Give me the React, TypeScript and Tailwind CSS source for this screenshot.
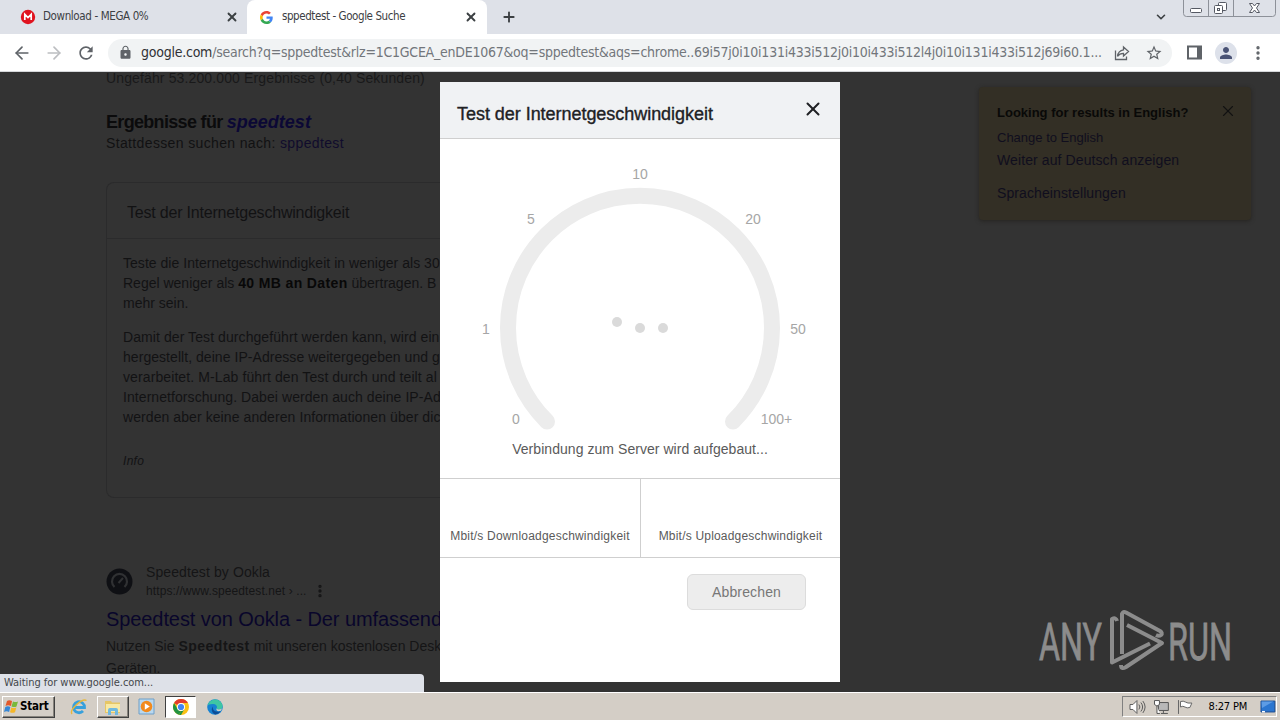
import type { ReactNode } from "react";
import { ArrowLeft, ArrowRight, ChevronDown, MoreVertical, Plus, X } from "lucide-react";
import { MdLock, MdRefresh, MdStarBorder, MdPerson } from "react-icons/md";

/* ---------- Browser chrome ---------- */

function MegaIcon() {
  return (
    <svg className="w-4 h-4" viewBox="0 0 16 16">
      <circle cx="8" cy="8" r="7.2" fill="#e0131f" />
      <path d="M4.8 11V5.4L8 8.6l3.2-3.2V11" fill="none" stroke="#fff" strokeWidth="1.7" />
    </svg>
  );
}

function GoogleIcon() {
  return (
    <svg className="w-[13px] h-[13px]" viewBox="0 0 48 48">
      <path fill="#EA4335" d="M24 9.5c3.5 0 6.7 1.2 9.2 3.6l6.9-6.9C35.9 2.4 30.5 0 24 0 14.6 0 6.5 5.4 2.6 13.2l8 6.2C12.4 13.7 17.7 9.5 24 9.5z" />
      <path fill="#4285F4" d="M47 24.6c0-1.6-.2-3.1-.4-4.6H24v9h12.9c-.6 3-2.2 5.500-4.700 7.200l7.700 6C44.400 38 47 31.800 47 24.600z" />
      <path fill="#FBBC05" d="M10.500 28.600c-.5-1.500-.8-3-.8-4.600s.3-3.100.8-4.600l-8-6.200C.9 16.500 0 20.100 0 24s.9 7.500 2.600 10.800l7.900-6.200z" />
      <path fill="#34A853" d="M24 48c6.500 0 11.900-2.100 15.900-5.800l-7.700-6c-2.200 1.500-4.900 2.300-8.200 2.300-6.300 0-11.600-4.200-13.500-9.900l-7.900 6.200C6.500 42.600 14.600 48 24 48z" />
    </svg>
  );
}

function WindowControls() {
  return (
    <svg className="absolute top-0 left-[1183px] w-[94px] h-[17px]" viewBox="0 0 94 17" fill="none">
      <path d="M.5 0v13.500q0 3 3 3h86q3 0 3-3V0M25.500 0v16M50.500 0v16" stroke="#8d9199" />
      <rect x="7.500" y="8.500" width="11" height="4" rx="1" fill="#fff" stroke="#555963" />
      <rect x="35.500" y="2.500" width="8" height="8" rx="1" fill="#fff" stroke="#555963" />
      <rect x="31.500" y="5.500" width="8" height="8" rx="1" fill="#fff" stroke="#555963" />
      <rect x="34.500" y="8.500" width="2" height="2" stroke="#555963" />
      <path d="M66.500 3.500h3l2 2.500 2-2.500h3L73.500 8l3 4.500h-3l-2-2.500-2 2.500h-3l3-4.500z" fill="#fff" stroke="#555963" />
    </svg>
  );
}

function TabStrip() {
  return (
    <div className="relative flex h-[34px] bg-[#dee1e8] text-[11.5px] text-[#3c4043]">
      <div className="flex w-[247px] items-center pl-5">
        <MegaIcon />
        <span className="ml-[7px] w-[106px] whitespace-nowrap tracking-[-0.37px]">Download - MEGA 0%</span>
        <X className="ml-[76px] w-3.5 h-3.5" strokeWidth={3.200} />
      </div>
      <div className="flex w-[240px] items-center rounded-t-lg bg-white pl-[13px]">
        <GoogleIcon />
        <span className="ml-[9px] w-[124px] whitespace-nowrap tracking-[-0.42px]">sppedtest - Google Suche</span>
        <X className="ml-[58px] w-3.5 h-3.5" strokeWidth={3.200} />
      </div>
      <Plus className="ml-[14px] mt-[9px] w-4 h-4" strokeWidth={2.800} />
      <ChevronDown className="absolute left-[1154px] top-[10px] w-3.5 h-3.5" strokeWidth={2.800} />
      <WindowControls />
    </div>
  );
}

function Toolbar() {
  return (
    <div className="flex h-[38px] items-center border-b border-[#d5d7da] bg-white text-[#5f6368]">
      <ArrowLeft className="ml-[12px] w-5 h-5" />
      <ArrowRight className="ml-[12px] w-5 h-5 text-[#bcbec1]" />
      <MdRefresh className="ml-[12px] w-5 h-5" />
      <div className="ml-[12px] flex h-[28px] w-[1064px] items-center rounded-full bg-[#f1f3f4] pl-[10px]">
        <MdLock className="w-[15px] h-[15px]" />
        <span className="ml-[8px] w-[961px] whitespace-nowrap text-[14px] tracking-[-0.243px] text-[#72767b]">
          <span className="text-[#303134]">google.com</span>
          /search?q=sppedtest&amp;rlz=1C1GCEA_enDE1067&amp;oq=sppedtest&amp;aqs=chrome..69i57j0i10i131i433i512j0i10i433i512l4j0i10i131i433i512j69i60.1...
        </span>
        <svg className="ml-[12px] w-4 h-4" viewBox="0 0 16 16" fill="none" stroke="currentColor" strokeWidth="1.300">
          <path d="M1.500 5.500v9h11v-3M9.500 2l5 4.500-5 4.500V8.300c-3 0-4.700 1-6 3 .4-3.300 2.200-5.800 6-6.400z" />
        </svg>
        <MdStarBorder className="ml-[15px] w-[18px] h-[18px]" />
      </div>
      <svg className="ml-[15px] w-[15px] h-[15px]" viewBox="0 0 15 15" fill="none">
        <path d="M1 1.500h13v12H1z" stroke="currentColor" strokeWidth="2" />
        <path d="M10 1h4v13h-4z" fill="currentColor" />
      </svg>
      <span className="ml-[13px] flex h-[22px] w-[22px] items-center justify-center rounded-full bg-[#dde1ea] text-[#4a5375]">
        <MdPerson className="w-[18px] h-[18px]" />
      </span>
      <MoreVertical className="ml-[12px] w-[18px] h-[18px]" strokeWidth={2.500} />
    </div>
  );
}

/* ---------- Search results behind the dialog ---------- */

function Line({ className, children }: { className: string; children: ReactNode }) {
  return <div className={`whitespace-nowrap ${className}`}>{children}</div>;
}

function SpeedtestCard() {
  return (
    <div className="mt-[29px] h-[316px] w-[334px] rounded-l-lg border border-r-0 border-[#2b2b2c] text-[14px] leading-5 text-[#121213]">
      <Line className="h-[56px] border-b border-[#2b2b2c] pl-5 pt-[20px] text-[16px] tracking-[-0.2px]">
        Test der Internetgeschwindigkeit
      </Line>
      <div className="pl-4 pt-[14px]">
        <Line className="tracking-[0.03px]">Teste die Internetgeschwindigkeit in weniger als 30</Line>
        <Line className="">
          Regel weniger als <b className="tracking-[0.37px] text-[#080808]">40 MB an Daten</b> übertragen. B
        </Line>
        <Line className="">mehr sein.</Line>
        <Line className="mt-[14px] tracking-[0.08px]">Damit der Test durchgeführt werden kann, wird ein</Line>
        <Line className="tracking-[0.05px]">hergestellt, deine IP-Adresse weitergegeben und g</Line>
        <Line className="tracking-[0.1px]">verarbeitet. M-Lab führt den Test durch und teilt al</Line>
        <Line className="tracking-[0.07px]">Internetforschung. Dabei werden auch deine IP-Ad</Line>
        <Line className="tracking-[0.08px]">werden aber keine anderen Informationen über dic</Line>
        <Line className="mt-[24px] text-[12px] italic tracking-[0.3px]">Info</Line>
      </div>
    </div>
  );
}

function OoklaResult() {
  return (
    <div className="mt-[64px] text-[14px] text-[#151516]">
      <div className="flex h-[38px]">
        <svg className="mt-[6px] w-[27px] h-[27px]" viewBox="0 0 27 27" fill="none">
          <circle cx="13.500" cy="13.500" r="13" fill="#0f1014" />
          <path d="M8.500 19a7.500 7.500 0 1 1 10 0" stroke="#303133" strokeWidth="2.200" />
          <path d="M12.500 15l4.500-5" stroke="#303133" strokeWidth="2" />
        </svg>
        <div className="ml-[13px]">
          <Line className="leading-5 tracking-[0.1px]">Speedtest by Ookla</Line>
          <div className="flex items-center text-[12px] leading-[18px]">
            <span className="w-[158px] whitespace-nowrap tracking-[0.1px]">https://www.speedtest.net › ...</span>
            <MoreVertical className="ml-[8px] w-4 h-4" strokeWidth={3} />
          </div>
        </div>
      </div>
      <Line className="mt-[6px] text-[20px] leading-[26px] tracking-[-0.09px] text-[#09062b]">Speedtest von Ookla - Der umfassend</Line>
      <Line className="mt-[3px] leading-[22px]">
        Nutzen Sie <b className="tracking-[0.5px]">Speedtest</b> mit unseren kostenlosen Desk
      </Line>
      <Line className="leading-[22px]">Geräten.</Line>
    </div>
  );
}

function Results() {
  return (
    <div className="h-full w-[440px] overflow-hidden pl-[106px]">
      <Line className="-mt-[4px] text-[14px] leading-5 tracking-[0.13px] text-[#19191a]">
        Ungefähr 53.200.000 Ergebnisse (0,40 Sekunden)
      </Line>
      <Line className="mt-[22px] text-[18px] font-bold leading-6 tracking-[-0.68px] text-[#0b0b0c]">
        Ergebnisse für <i className="tracking-[0px] text-[#0b0835]">speedtest</i>
      </Line>
      <Line className="mt-[-1px] text-[14px] leading-5 tracking-[0.36px] text-[#111112]">
        Stattdessen suchen nach: <span className="text-[#100c2c]">sppedtest</span>
      </Line>
      <SpeedtestCard />
      <OoklaResult />
    </div>
  );
}

function LanguageBox() {
  return (
    <div className="mt-[15px] ml-[139px] h-[133px] w-[272px] rounded-sm bg-[#332f25] pl-[18px] pt-[15px] text-[14px] leading-5 text-[#100e1e] shadow-[0_1px_4px_#252320]">
      <div className="flex">
        <Line className="w-[192px] pt-px text-[13px] font-bold text-[#090908]">Looking for results in English?</Line>
        <X className="ml-[30px] w-[18px] h-[18px] text-[#121212]" strokeWidth={1.500} />
      </div>
      <Line className="mt-[5px] text-[13px]">Change to English</Line>
      <Line className="mt-[2px] tracking-[0.1px]">Weiter auf Deutsch anzeigen</Line>
      <Line className="mt-[13px] tracking-[0.1px]">Spracheinstellungen</Line>
    </div>
  );
}

function AnyRunMark() {
  return (
    <div className="absolute left-[1038px] top-[536px] flex h-[66px] w-[194px] text-[#8c8c8c]">
      <svg viewBox="0 0 194 66" className="h-full w-full" fill="none" stroke="currentColor">
        <g fill="currentColor" strokeWidth="0.800" fontFamily="Roboto, sans-serif" fontSize="52">
          <text x="1" y="51.500" textLength="63" lengthAdjust="spacingAndGlyphs">ANY</text>
          <text x="130" y="51.500" textLength="64" lengthAdjust="spacingAndGlyphs">RUN</text>
        </g>
        <g strokeWidth="4" strokeLinejoin="round">
          <path d="M79 13q-1-4-5-2v43.500l38-19" />
          <path d="M84 46V6q1-3 4-1.500l34 18.500q3 2 1 4-2 1.500-5 0" />
          <path d="M89 17l35 18-36 24q-5 3-5-2" />
        </g>
      </svg>
    </div>
  );
}

/* ---------- Speed test dialog ---------- */

const TICKS = [
  { label: "0", x: 76, y: 285 },
  { label: "1", x: 46, y: 195 },
  { label: "5", x: 91, y: 85 },
  { label: "10", x: 200, y: 40 },
  { label: "20", x: 313, y: 85 },
  { label: "50", x: 358, y: 195 },
  { label: "100+", x: 336.500, y: 285 },
];

function Gauge() {
  return (
    <svg className="block w-[400px] h-[298px]" viewBox="0 0 400 298">
      <path d="M107 282.500A132 132 0 1 1 293 282.500" fill="none" stroke="#ececec" strokeWidth="16" strokeLinecap="round" />
      <g fill="#dadada">
        <circle cx="177" cy="183" r="5" />
        <circle cx="200" cy="189" r="5" />
        <circle cx="223" cy="189" r="5" />
      </g>
      <g fill="#a6a6a6" fontSize="14" textAnchor="middle">
        {TICKS.map((t) => (
          <text key={t.label} x={t.x} y={t.y}>
            {t.label}
          </text>
        ))}
      </g>
    </svg>
  );
}

function SpeedDialog() {
  return (
    <div className="absolute left-[440px] top-[10px] flex h-[600px] w-[400px] flex-col bg-white text-[#5a5a5a]">
      <div className="flex h-[57px] shrink-0 justify-between border-b border-[#cfcfcf] bg-[#f0f2f4] pl-[17px] pr-[16px] text-[#202124]">
        <span className="mt-[20px] whitespace-nowrap text-[18px] leading-6 tracking-[-0.04px] [-webkit-text-stroke:0.35px]">
          Test der Internetgeschwindigkeit
        </span>
        <X className="mt-[16px] w-[22px] h-[22px]" strokeWidth={2.200} />
      </div>
      <Gauge />
      <div className="h-[41px] shrink-0 text-center text-[14px] leading-5 tracking-[0.05px]">
        <div className="pt-[2px]">Verbindung zum Server wird aufgebaut...</div>
      </div>
      <div className="flex h-[80px] shrink-0 border-y border-[#cfcfcf] text-center text-[12px] leading-4">
        <div className="w-[201px] border-r border-[#cfcfcf] pt-[49px] tracking-[0.2px]">Mbit/s Downloadgeschwindigkeit</div>
        <div className="flex-1 pt-[49px] tracking-[0.2px]">Mbit/s Uploadgeschwindigkeit</div>
      </div>
      <button className="ml-[247px] mt-[16px] h-[36px] w-[119px] rounded-md border border-[#dcdcdc] bg-[#ededed] text-[14px] tracking-[0.15px] text-[#777]">
        Abbrechen
      </button>
    </div>
  );
}

/* ---------- Windows taskbar ---------- */

function StartButton() {
  return (
    <div className="flex h-[22px] w-[53px] items-center gap-px border border-t-white border-l-white border-r-[#404040] border-b-[#404040] pl-px text-[11.5px] font-bold text-black shadow-[inset_-1px_-1px_#87837c]">
      <svg className="w-[15px] h-[15px] shrink-0" viewBox="0 0 15 15">
        <path d="M3 2q2-1.500 5 0L7 7Q4 5.500 1.500 7z" fill="#e3592a" />
        <path d="M9 2.500q2.500 1 5 0L12.500 7.500q-2 1-5 0z" fill="#79b93c" />
        <path d="M1.300 8q2.500-1.500 5 0l-1.200 5Q2.500 11.500 0 13z" fill="#3687d5" />
        <path d="M7.300 8.500q2.500 1 5 0L11 13.300q-2.500 1-5 0z" fill="#f5b729" />
      </svg>
      <span className="pt-px tracking-[-0.2px]">Start</span>
    </div>
  );
}

function ExplorerEIcon() {
  return (
    <svg className="w-[18px] h-[18px]" viewBox="0 0 18 18" fill="none">
      <path d="M4 9.500h10.500A5.500 5.500 0 1 0 13 13" stroke="#37a0dc" strokeWidth="2.800" />
      <path d="M2 16C-1 12 12 0 16.500 2.500" stroke="#e8b73a" strokeWidth="1.400" />
    </svg>
  );
}

function FolderIcon() {
  return (
    <svg className="w-[18px] h-[18px]" viewBox="0 0 18 18">
      <path d="M1 3h6l1 1.500h8V15H1z" fill="#e6c665" />
      <path d="M2 6h14v8H2z" fill="#f8e9a5" />
      <path d="M4 17v-5q0-2 2-2h6q2 0 2 2v5h-3v-4H7v4z" fill="#70b9df" />
    </svg>
  );
}

function MediaIcon() {
  return (
    <svg className="w-[17px] h-[17px]" viewBox="0 0 17 17">
      <path d="M1 1h15v15H1z" fill="#b9d8ef" stroke="#6f9fc8" />
      <circle cx="8.500" cy="8.500" r="5.800" fill="#f28a1c" />
      <path d="M6.800 5.200v6.600l5-3.300z" fill="#fff" />
    </svg>
  );
}

function ChromeIcon() {
  return (
    <svg className="w-4 h-4" viewBox="0 0 16 16">
      <circle cx="8" cy="8" r="8" fill="#fbc116" />
      <path d="M1.070 4A8 8 0 0 1 14.930 4H8a4 4 0 0 0-3.500 2z" fill="#e33b2e" />
      <path d="M1.070 4l3.460 6A4 4 0 0 0 8 12l-2 3.750A8 8 0 0 1 1.070 4z" fill="#229342" />
      <path d="M8 12l3.460-2L8 16a8 8 0 0 1-2-.25z" fill="#229342" />
      <circle cx="8" cy="8" r="4" fill="#fff" />
      <circle cx="8" cy="8" r="3.100" fill="#4285f4" />
    </svg>
  );
}

function EdgeIcon() {
  return (
    <svg className="w-4 h-4" viewBox="0 0 16 16">
      <circle cx="8" cy="8" r="7.800" fill="#1682d2" />
      <path d="M.5 6.500C2 1 8-1 12 1.500c4 2.500 4.500 7 2 8.500-1.500 1-4 .7-4.500-.5 1.500-2-.5-5-4-4.500C2.500 5 1 6 .5 6.500z" fill="#3ec6a4" />
      <path d="M6 7.500c-1 3 2 6.500 7.500 4.800-1 1.700-3 3-5 3.200C5 14.500 3.500 10 6 7.500z" fill="#0d4d97" />
      <path d="M9.500 9.500c1 1.500 3.500 1.200 5.500 0l-1 2.300c-3 1-5 .2-4.500-2.300z" fill="#d4d0c8" />
    </svg>
  );
}

function Tray() {
  return (
    <div className="ml-auto mr-[3px] flex h-[21px] w-[155px] items-center border border-t-[#808080] border-l-[#808080] border-r-white border-b-white pl-[6px] text-[11px] text-black">
      <svg className="w-[17px] h-[16px]" viewBox="0 0 17 16" fill="none" stroke="#5c5c5c">
        <path d="M1 5.500h3l4-4v13l-4-4H1z" fill="#fff" />
        <path d="M10 5.500q2 2.500 0 5M12 3.500q3.500 4.500 0 9M14 2q4.500 6 0 12" />
      </svg>
      <svg className="ml-[7px] w-[17px] h-[16px]" viewBox="0 0 17 16" fill="none" stroke="#555">
        <path d="M5.500 3.500h10v8h-10z" fill="#b8b8b8" />
        <path d="M8 14.500h7M10.500 12v2M1.500 1.500h5v4q-2.500 3-5 0zM4 7v7.500h3" fill="#fff" />
      </svg>
      <svg className="ml-[7px] w-[17px] h-[16px]" viewBox="0 0 17 16" fill="#fff" stroke="#666">
        <path d="M1.500 1v14M3.500 2.500q3-1 5 .5t6.500 1l-2 4.500q-3 1-5-.5t-4.500 0z" />
      </svg>
      <span className="ml-[15px] w-[42px] whitespace-nowrap pt-[2px] tracking-[-0.2px]">8:27 PM</span>
      <svg className="ml-[10px] w-[16px] h-[14px]" viewBox="0 0 16 14">
        <path d="M1 1h14v11H1z" fill="#2b76d0" stroke="#174a91" />
        <path d="M1.500 1.500h12L2 8z" fill="#5d9ce5" />
        <path d="M2 11h3v1.500H2z" fill="#fff" />
      </svg>
    </div>
  );
}

function Taskbar() {
  return (
    <div className="flex h-[28px] items-center border-t border-white bg-[#d4cec6] pl-[2px]">
      <StartButton />
      <span className="ml-[15px]">
        <ExplorerEIcon />
      </span>
      <div className="ml-[9px] flex h-[22px] w-[32px] items-center justify-center border border-t-white border-l-white border-r-[#404040] border-b-[#404040] shadow-[inset_-1px_-1px_#87837c]">
        <FolderIcon />
      </div>
      <span className="ml-[9px]">
        <MediaIcon />
      </span>
      <div className="ml-[10px] flex h-[22px] w-[31px] items-center justify-center border border-t-[#404040] border-l-[#404040] border-r-white border-b-white bg-white">
        <ChromeIcon />
      </div>
      <span className="ml-[11px]">
        <EdgeIcon />
      </span>
      <Tray />
    </div>
  );
}

export default function App() {
  return (
    <div className="flex h-[720px] w-[1280px] flex-col overflow-hidden font-['DejaVu_Sans_Condensed','DejaVu_Sans',sans-serif]">
      <TabStrip />
      <Toolbar />
      <main className="relative flex h-[620px] bg-[#333] font-['Liberation_Sans',Arial,sans-serif]">
        <Results />
        <div className="w-[400px]" />
        <LanguageBox />
        <SpeedDialog />
        <AnyRunMark />
        <div className="absolute bottom-0 left-0 flex h-[18px] w-[424px] items-center rounded-tr bg-[#dee1e8] pl-[4px] pt-px font-['DejaVu_Sans_Condensed','DejaVu_Sans',sans-serif] text-[11px] tracking-[-0.05px] text-[#44474b]">
          Waiting for www.google.com...
        </div>
      </main>
      <Taskbar />
    </div>
  );
}
